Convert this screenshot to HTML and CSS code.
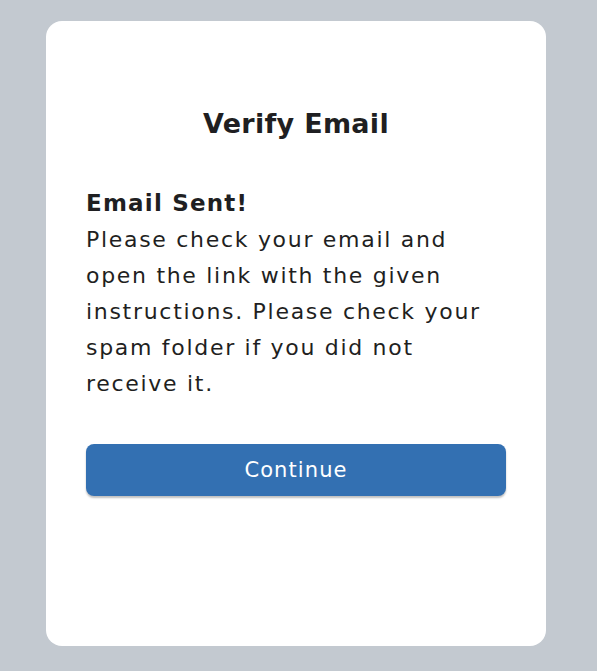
FILE: index.html
```html
<!DOCTYPE html>
<html lang="en">
<head>
<meta charset="utf-8">
<title>Verify Email</title>
<link rel="stylesheet" href="styles.css">
</head>
<body>
<main class="page">
  <section class="card">
    <h1 class="title">Verify Email</h1>
    <div class="message">
      <h2 class="subtitle">Email Sent!</h2>
      <p class="text">Please check your email and open the link with the given instructions. Please check your spam folder if you did not receive it.</p>
    </div>
    <button class="btn" type="button">Continue</button>
  </section>
</main>
</body>
</html>
```

FILE: styles.css
```css
html, body {
  margin: 0;
  padding: 0;
}
body {
  background: #c3c9d0;
  font-family: "DejaVu Sans", "Noto Sans", sans-serif;
  color: #1f1f22;
}
.page {
  display: flex;
  justify-content: flex-start;
  padding: 21px 0 0 46px;
  height: 671px;
  box-sizing: border-box;
}
.card {
  width: 500px;
  height: 625px;
  box-sizing: border-box;
  background: #ffffff;
  border-radius: 16px;
  padding: 86px 40px 40px;
  display: flex;
  flex-direction: column;
}
.title {
  margin: 0;
  text-align: center;
  font-size: 27px;
  font-weight: 700;
  line-height: 34px;
  letter-spacing: 0.3px;
}
.message {
  margin-top: 45px;
}
.subtitle {
  margin: 0;
  font-size: 23px;
  font-weight: 700;
  line-height: 34px;
  letter-spacing: 1.2px;
}
.text {
  margin: 2px 0 0;
  font-size: 22px;
  line-height: 36px;
  letter-spacing: 1.7px;
}
.btn {
  margin-top: 42px;
  height: 52px;
  border: none;
  border-radius: 8px;
  background: #3370b2;
  color: #ffffff;
  font-family: inherit;
  font-size: 21px;
  letter-spacing: 1.1px;
  box-shadow: 0 2px 2px rgba(0, 0, 0, 0.25);
  cursor: pointer;
}
```
